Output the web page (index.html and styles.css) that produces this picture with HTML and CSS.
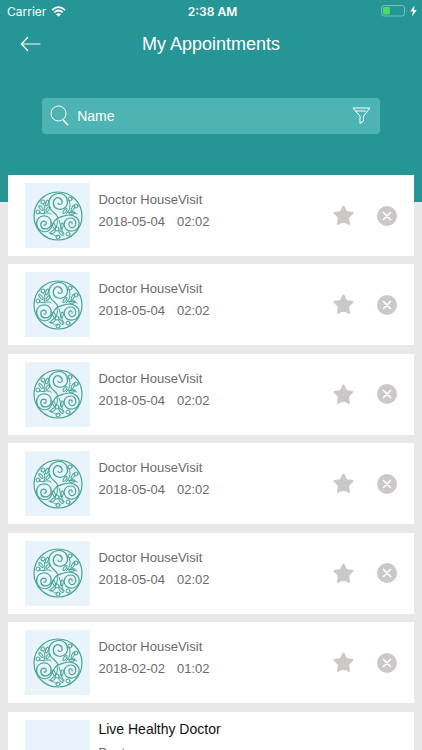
FILE: index.html
```html
<!DOCTYPE html>
<html lang="en">
<head>
<meta charset="utf-8">
<meta name="viewport" content="width=device-width, initial-scale=1">
<title>My Appointments</title>
<link rel="stylesheet" href="styles.css">
</head>
<body>
<svg class="symbols" aria-hidden="true">
  <symbol id="emblem" viewBox="0 0 50 50">
    <g fill="none" stroke="#45a590" stroke-width="1" stroke-linecap="round">
      <circle cx="25" cy="25" r="24" stroke-width="1.2"/>
      <path stroke-width="1.2" d="M25 27C24 22 17 21 16 14C15 8 19 3 25 2.500C31 2 35 6 34.500 12C34 17 29 19 25 18C20 17 19 11 22 8C25 5 30 8 29 12C28 14 25 14 25 12"/>
      <path stroke-width="1.2" d="M25 27C21 29 20 33 18 37C15 42 9 42 5 37C2 32 4 26 10 25C16 24 19 29 18 34C16 39 9 39 8 35C7 31 10 29 13 31C14 33 12 35 11 34"/>
      <path stroke-width="1.2" d="M25 27C29 26 31 24 36 24C42 24 47 28 46 34C45 40 37 42 33 38C29 33 32 27 38 27C43 27 44 34 41 36C38 38 35 35 36 32C37 30 40 31 39 33"/>
      <path d="M6 22C10 24 14 20 18 23M8 12C13 13 12 18 11 23M33 23C37 20 38 15 36 9M34 21C38 22 42 21 44 23M24 28C25 32 24 34 23 37M26 29C28 34 28 39 31 43M16 42C20 42 21 46 25 45"/>
      <ellipse cx="14" cy="12" rx="1.200" ry="3" transform="rotate(20 14 12)"/>
      <ellipse cx="8" cy="17" rx="1.200" ry="3" transform="rotate(-40 8 17)"/>
      <ellipse cx="15" cy="18" rx="1.200" ry="3" transform="rotate(35 15 18)"/>
      <ellipse cx="32" cy="20" rx="1.200" ry="3" transform="rotate(35 32 20)"/>
      <ellipse cx="40" cy="17" rx="1.200" ry="3" transform="rotate(30 40 17)"/>
      <ellipse cx="39" cy="22" rx="1.200" ry="3" transform="rotate(80 39 22)"/>
      <ellipse cx="21" cy="35" rx="1.200" ry="3" transform="rotate(-20 21 35)"/>
      <ellipse cx="29" cy="35" rx="1.200" ry="3" transform="rotate(10 29 35)"/>
      <ellipse cx="20" cy="41" rx="1.200" ry="3" transform="rotate(50 20 41)"/>
      <ellipse cx="28" cy="42" rx="1.200" ry="3" transform="rotate(-40 28 42)"/>
      <circle cx="10" cy="11" r="2"/><circle cx="37" cy="8" r="2"/>
      <circle cx="5" cy="21" r="2"/><circle cx="43" cy="15" r="2"/>
      <circle cx="24" cy="38" r="2"/><circle cx="25" cy="46" r="2"/><circle cx="35" cy="43" r="2"/>
    </g>
  </symbol>
  <symbol id="star" viewBox="0 0 20 20">
    <path d="M10 1.5L12.6 6.8L18.5 7.7L14.2 11.8L15.2 18L10 15.1L4.8 18L5.8 11.8L1.5 7.7L7.4 6.8Z" fill="currentColor" stroke="currentColor" stroke-width="2" stroke-linejoin="round"/>
  </symbol>
  <symbol id="cancel" viewBox="0 0 20 20">
    <circle cx="10" cy="10" r="10" fill="currentColor"/>
    <path d="M6.5 6.5L13.5 13.5M13.5 6.5L6.5 13.5" stroke="#fff" stroke-width="1.7" stroke-linecap="round"/>
  </symbol>
</svg>

<header class="hero">
  <div class="status">
    <div class="carrier">
      <span>Carrier</span>
      <svg width="15" height="11" viewBox="0 0 15 11" aria-hidden="true">
        <path d="M1 4.2Q7.5 -1.8 14 4.2M3.3 6.4Q7.5 2.6 11.7 6.4" fill="none" stroke="#fff" stroke-width="1.7"/>
        <path d="M5 8.2Q7.5 6.2 10 8.2L7.5 10.8Z" fill="#fff"/>
      </svg>
    </div>
    <time class="clock">2:38 AM</time>
    <svg class="battery" width="37" height="12" viewBox="0 0 37 12" aria-hidden="true">
      <rect x=".5" y=".5" width="23" height="10.5" rx="2.5" fill="none" stroke="#79bdbc"/>
      <rect x="2" y="2" width="7" height="7.5" rx="1" fill="#4cd964"/>
      <path d="M25 4Q26.5 5.7 25 7.5Z" fill="#79bdbc"/>
      <path d="M33.500 .5L29.300 6.400H32L31 11.500L35.800 5H33Z" fill="#fff"/>
    </svg>
  </div>
  <nav class="bar">
    <button class="icon-button back" type="button" aria-label="Back">
      <svg width="22" height="16" viewBox="0 0 22 16" aria-hidden="true"><path d="M8 1L1.5 8L8 15M1.5 8H20.5" fill="none" stroke="#fff" stroke-width="1.2"/></svg>
    </button>
    <h1 class="title">My Appointments</h1>
  </nav>
  <form class="search">
    <label for="name" aria-label="Search by name">
      <svg width="20" height="22" viewBox="0 0 20 22" aria-hidden="true"><circle cx="8.5" cy="8.5" r="7.5" fill="none" stroke="#fff"/><path d="M13.3 15L18 20.3" stroke="#fff" stroke-width="1.5"/></svg>
    </label>
    <input id="name" type="text" placeholder="Name">
    <button class="icon-button" type="button" aria-label="Filter">
      <svg width="20" height="18" viewBox="0 0 20 18" aria-hidden="true"><path d="M1 1H18L11.500 9.200V14L8 16.500V9.200ZM3.500 4H14" fill="none" stroke="#fff" stroke-linejoin="round"/></svg>
    </button>
  </form>
</header>

<main class="list" id="list"></main>
<script src="script.js"></script>
</body>
</html>
```
FILE: styles.css
```css
* {
  box-sizing: border-box;
}

body {
  margin: 0;
  height: 100vh;
  overflow: hidden;
  background: #e8e8e8;
  color: #6a6a6a;
  font-family: "Liberation Sans", Arial, sans-serif;
}

svg {
  display: block;
}

.symbols {
  position: absolute;
  width: 0;
  height: 0;
}

.hero {
  padding-bottom: 68px;
  background: #259695;
  color: #fff;
}

.status {
  display: grid;
  grid-template-columns: 1fr auto 1fr;
  align-items: center;
  height: 22px;
  padding: 0 4px 0 7px;
  font-family: Inter, sans-serif;
  font-size: 12px;
}

.carrier {
  display: flex;
  align-items: center;
  gap: 5px;
}

.clock {
  font-weight: 600;
}

.battery {
  justify-self: end;
}

.bar {
  display: grid;
  grid-template-columns: 42px 1fr 42px;
  align-items: center;
  height: 44px;
}

.icon-button {
  display: block;
  padding: 0;
  border: 0;
  background: none;
  color: #ccc8c8;
}

.back {
  justify-self: end;
}

.title {
  margin: 0;
  font-size: 18px;
  font-weight: 400;
  text-align: center;
}

.search {
  display: flex;
  align-items: center;
  gap: 7px;
  height: 36px;
  margin: 32px 10% 0;
  padding: 0 8px;
  border-radius: 4px;
  background: #4db3b3;
}

.search input {
  flex: 1;
  min-width: 0;
  padding: 0;
  border: 0;
  background: none;
  color: #fff;
  font: 14px "Liberation Sans", Arial, sans-serif;
}

.search input::placeholder {
  color: #fff;
  opacity: 1;
}

.list {
  display: grid;
  gap: 2vw;
  margin: -27px 2vw 0;
}

.card {
  display: flex;
  gap: 8px;
  padding: 8px 17px;
  background: #fff;
}

.thumb {
  display: grid;
  place-items: center;
  width: 65px;
  height: 65px;
  background: #e8f4f9;
}

.details {
  flex: 1;
  padding-top: 6px;
  font-size: 13px;
  line-height: 22px;
}

.details p,
.details h2 {
  margin: 0;
}

.when {
  display: flex;
  gap: 12px;
}

.doctor {
  display: flex;
  flex-direction: column;
  gap: 4px;
  padding-top: 0;
}

.doctor h2 {
  color: #111;
  font-size: 14px;
  font-weight: 400;
  line-height: 18px;
}

.actions {
  display: flex;
  align-items: center;
  gap: 23px;
}
```
FILE: script.js
```js
const visits = [
  ["2018-05-04", "02:02"],
  ["2018-05-04", "02:02"],
  ["2018-05-04", "02:02"],
  ["2018-05-04", "02:02"],
  ["2018-05-04", "02:02"],
  ["2018-02-02", "01:02"],
];

const visitCard = ([date, time]) => `
  <article class="card">
    <div class="thumb"><svg width="50" height="50" aria-hidden="true"><use href="#emblem"/></svg></div>
    <div class="details">
      <p>Doctor HouseVisit</p>
      <p class="when"><time>${date}</time><time>${time}</time></p>
    </div>
    <div class="actions">
      <button class="icon-button" type="button" aria-label="Favourite"><svg width="21" height="21" aria-hidden="true"><use href="#star"/></svg></button>
      <button class="icon-button" type="button" aria-label="Cancel"><svg width="20" height="20" aria-hidden="true"><use href="#cancel"/></svg></button>
    </div>
  </article>`;

const doctorCard = `
  <article class="card">
    <div class="thumb"></div>
    <div class="details doctor">
      <h2>Live Healthy Doctor</h2>
      <p>Doctor</p>
    </div>
  </article>`;

document.getElementById("list").innerHTML = visits.map(visitCard).join("") + doctorCard;
```
